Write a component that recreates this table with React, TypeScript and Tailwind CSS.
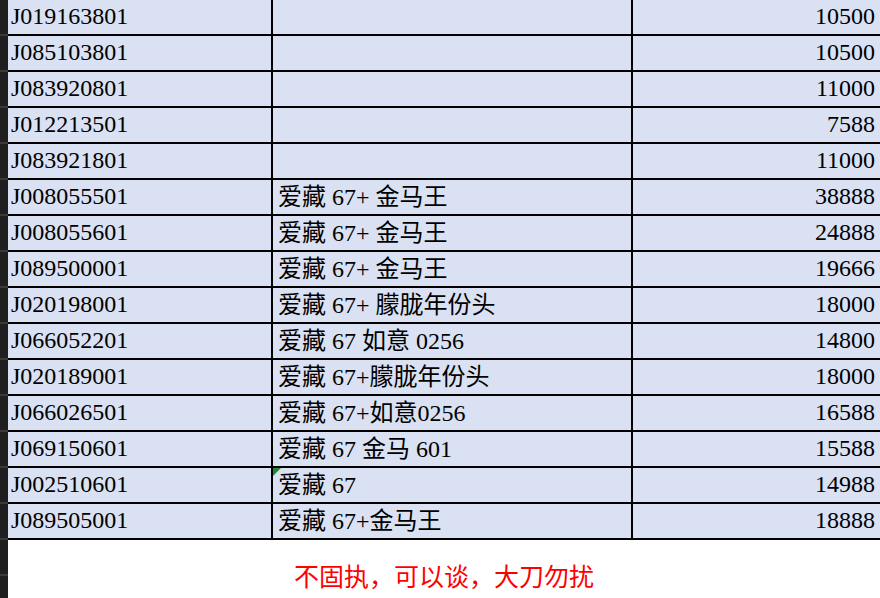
import React from 'react';

const rows = [
  { code: 'J019163801', name: '', price: '10500' },
  { code: 'J085103801', name: '', price: '10500' },
  { code: 'J083920801', name: '', price: '11000' },
  { code: 'J012213501', name: '', price: '7588' },
  { code: 'J083921801', name: '', price: '11000' },
  { code: 'J008055501', name: '爱藏 67+ 金马王', price: '38888' },
  { code: 'J008055601', name: '爱藏 67+ 金马王', price: '24888' },
  { code: 'J089500001', name: '爱藏 67+ 金马王', price: '19666' },
  { code: 'J020198001', name: '爱藏 67+ 朦胧年份头', price: '18000' },
  { code: 'J066052201', name: '爱藏 67 如意 0256', price: '14800' },
  { code: 'J020189001', name: '爱藏 67+朦胧年份头', price: '18000' },
  { code: 'J066026501', name: '爱藏 67+如意0256', price: '16588' },
  { code: 'J069150601', name: '爱藏 67 金马 601', price: '15588' },
  { code: 'J002510601', name: '爱藏 67', price: '14988', marker: true },
  { code: 'J089505001', name: '爱藏 67+金马王', price: '18888' },
];

export default function App() {
  return (
    <div
      className="flex w-[880px] h-[598px] overflow-hidden bg-white text-black"
      style={{ fontFamily: '"Liberation Serif", "Noto Sans CJK SC", serif' }}
    >
      {/* row header strip */}
      <div className="w-[8px] shrink-0 flex flex-col bg-[#1f1f1f]">
        {Array.from({ length: 17 }).map((_, i) => (
          <div key={i} className="h-[36px] shrink-0 border-b-2 border-[#3a3a3a]" />
        ))}
      </div>

      <div className="flex-1 flex flex-col">
        {rows.map((r) => (
          <div key={r.code} className="flex h-[36px] shrink-0 border-b-2 border-black bg-[#d9e1f2] text-[24px] leading-none">
            <div className="w-[265px] shrink-0 border-r-2 border-black flex items-center pl-[3px] pb-[2px]">
              {r.code}
            </div>
            <div className="relative w-[360px] shrink-0 border-r-2 border-black flex items-center pl-[5px] pb-[1px] whitespace-pre">
              {r.marker && (
                <svg className="absolute left-0 top-0" width="9" height="9" viewBox="0 0 9 9">
                  <polygon points="0,0 8,0 0,8" fill="#1e8a2e" />
                </svg>
              )}
              {r.name}
            </div>
            <div className="flex-1 flex items-center justify-end pr-[5px] pb-[2px]">{r.price}</div>
          </div>
        ))}

        <div className="flex-1 flex justify-center pt-[23px]">
          <span
            className="text-[25px] leading-none text-[#ff0000]"
            style={{ fontFamily: '"Noto Sans CJK SC", sans-serif' }}
          >
            不固执，可以谈，大刀勿扰
          </span>
        </div>
      </div>
    </div>
  );
}
